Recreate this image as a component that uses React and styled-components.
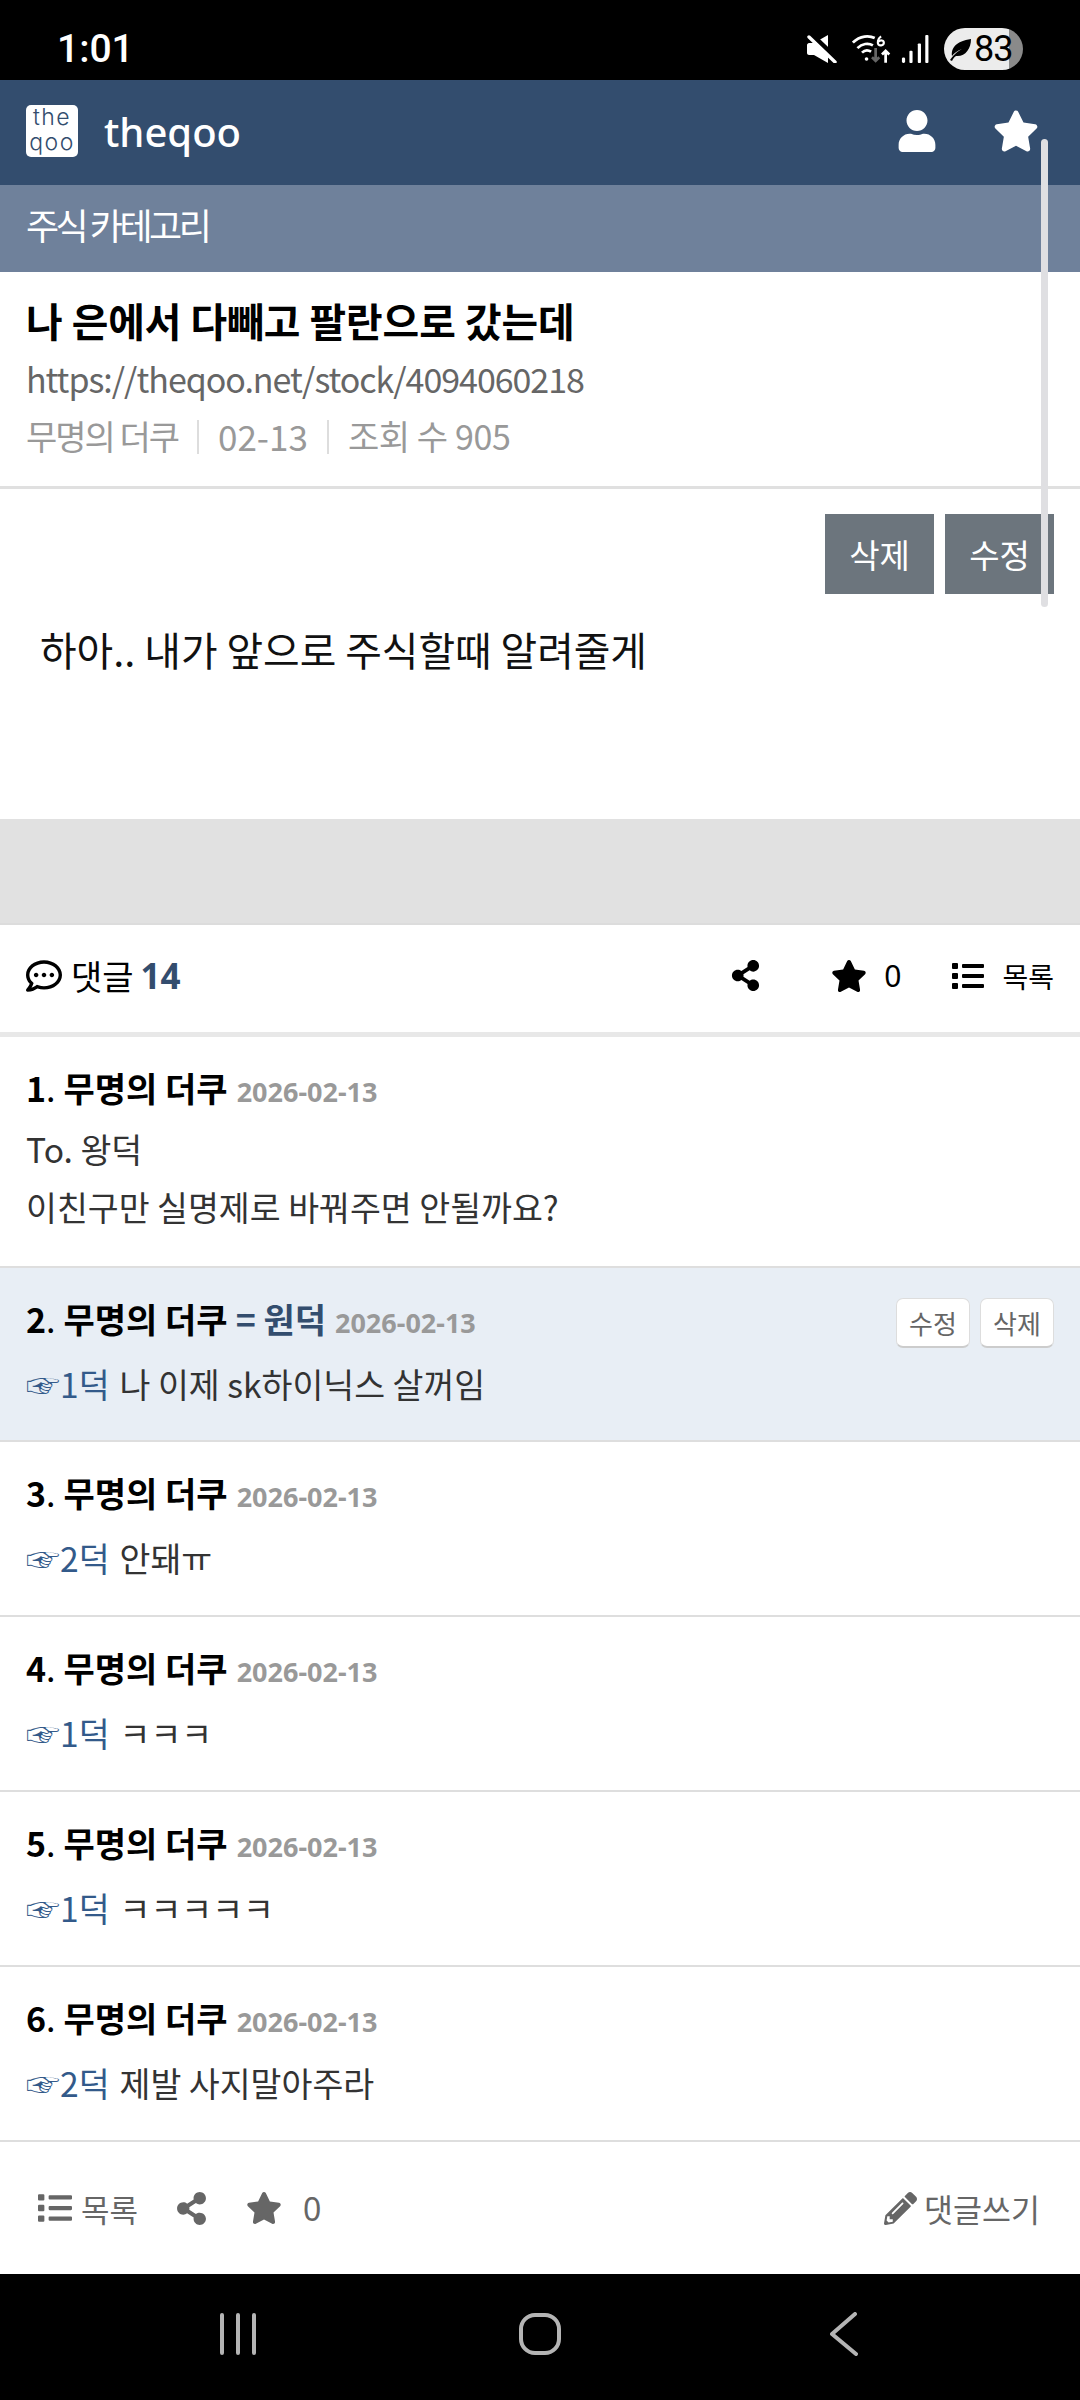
import React from "react";
import styled, { createGlobalStyle } from "styled-components";
import { FaUser, FaStar, FaRegCommentDots, FaShareAlt, FaList, FaPencilAlt } from "react-icons/fa";

const GlobalStyle = createGlobalStyle`
  html, body { margin: 0; padding: 0; background: #fff; }
  * { box-sizing: border-box; }
  body { font-family: "Noto Sans CJK KR", "Noto Sans", sans-serif; }
`;

const Page = styled.div`
  position: relative;
  width: 1080px;
  height: 2400px;
  overflow: hidden;
  display: flex;
  flex-direction: column;
  background: #fff;
`;

const StatusBar = styled.div`
  height: 80px;
  background: #000;
  color: #fff;
  display: flex;
  align-items: center;
  justify-content: space-between;
  padding: 18px 57px 0 57px;
`;
const Clock = styled.span`
  font-family: "Roboto", sans-serif;
  font-size: 39px;
  font-weight: 500;
`;
const StatusIcons = styled.div`
  display: flex;
  align-items: center;
  gap: 15px;
`;
const WifiIcon = styled.svg`
  margin-right: -6px;
`;
const Battery = styled.div`
  width: 79px;
  height: 42px;
  border-radius: 21px;
  background: linear-gradient(90deg, #ececec 82%, #8a8a8a 82%);
  color: #000;
  display: flex;
  align-items: center;
  padding-left: 5px;
  gap: 1px;
  font-family: "Roboto", sans-serif;
  font-size: 36px;
  letter-spacing: -1px;
`;

const Header = styled.header`
  height: 105px;
  background: #334d6e;
  display: flex;
  align-items: center;
  padding: 0 41px 3px 26px;
  color: #fff;
`;
const Logo = styled.div`
  width: 52px;
  height: 52px;
  border-radius: 5px;
  background: #fff;
  color: #334d6e;
  display: flex;
  flex-direction: column;
  align-items: center;
  font-family: "Inter", sans-serif;
  font-weight: 300;
  font-size: 23px;
  line-height: 25px;
  letter-spacing: 1.5px;
`;
const Brand = styled.span`
  margin-left: 26px;
  font-family: "Noto Sans", sans-serif;
  font-size: 40px;
  font-weight: 500;
  flex: 1;
`;
const HeaderIcon = styled.span`
  display: flex;
  margin-left: ${(p) => p.$gap || 0}px;
`;

const SubBar = styled.div`
  height: 87px;
  background: #6f819b;
  color: #fff;
  font-size: 36px;
  letter-spacing: -3.5px;
  display: flex;
  align-items: center;
  padding: 0 0 9px 26px;
`;

const TitleBlock = styled.section`
  height: 217px;
  padding: 23px 26px 0;
  border-bottom: 3px solid #e0e0e0;
`;
const Title = styled.h1`
  margin: 0;
  font-size: 39.8px;
  line-height: 50px;
  font-weight: 700;
  color: #000;
`;
const Url = styled.div`
  margin-top: 11px;
  font-size: 34px;
  line-height: 46px;
  letter-spacing: -1.05px;
  color: #666;
`;
const Meta = styled.div`
  margin-top: 11px;
  display: flex;
  align-items: center;
  line-height: 46px;
  color: #999;
`;
const MetaText = styled.span`
  font-size: ${(p) => p.$size || 34}px;
  letter-spacing: ${(p) => p.$spacing || 0}px;
`;
const MetaSep = styled.span`
  width: 2px;
  height: 34px;
  margin: 2px 19px 0;
  background: #ddd;
`;

const Body = styled.section`
  height: 330px;
  padding: 25px 26px 0;
`;
const Actions = styled.div`
  display: flex;
  justify-content: flex-end;
  gap: 11px;
`;
const ActionButton = styled.div`
  width: 109px;
  height: 80px;
  background: #6c757d;
  color: #fff;
  font-size: 33px;
  display: flex;
  align-items: center;
  justify-content: center;
`;
const BodyText = styled.p`
  margin: 29px 0 0 14px;
  font-size: 39.8px;
  line-height: 52px;
  color: #111;
`;

const AdBand = styled.div`
  height: 106px;
  background: #e1e1e1;
  border-bottom: 2px solid #dcdcdc;
`;

const CommentBar = styled.div`
  height: 112px;
  border-bottom: 5px solid #e8e8e8;
  padding: 0 26px 6px;
  display: flex;
  align-items: center;
  color: #000;
`;
const CommentTitle = styled.div`
  flex: 1;
  display: flex;
  align-items: center;
  gap: 9px;
  font-size: 34px;
`;
const Count = styled.b`
  color: #334d6e;
  font-family: "Noto Sans", sans-serif;
  font-weight: 700;
  font-size: 35px;
  margin-left: -2px;
`;
const BarItem = styled.div`
  display: flex;
  align-items: center;
  gap: ${(p) => p.$gap || 0}px;
  margin-left: ${(p) => p.$left || 0}px;
  font-size: ${(p) => p.$size || 28}px;
`;
const Zero = styled.span`
  font-family: "Noto Sans", sans-serif;
  font-size: ${(p) => p.$size || 30}px;
`;

const Comment = styled.article`
  position: relative;
  height: ${(p) => p.$height}px;
  padding: 27px 26px 0;
  background: ${(p) => (p.$mine ? "#e8eef5" : "#fff")};
  border-bottom: 2px solid #dedede;
`;
const CommentHead = styled.div`
  display: flex;
  align-items: baseline;
  font-size: 34px;
  line-height: 48px;
  font-weight: 700;
  color: #000;
`;
const Num = styled.span`
  font-weight: 700;
  span { font-weight: 400; }
`;
const Name = styled.span`
  margin-left: 8px;
`;
const Op = styled.span`
  margin-left: 8px;
  color: #334d6e;
`;
const Stamp = styled.span`
  margin-left: 9px;
  font-family: "Noto Sans", sans-serif;
  font-size: 27px;
  font-weight: 700;
  color: #999;
`;
const Line = styled.div`
  font-size: 33.6px;
  line-height: 58px;
  color: #333;
  margin-top: ${(p) => p.$top || 0}px;
`;
const Ref = styled.span`
  color: #335a8a;
  margin-right: 10px;
`;
const Hand = styled.span`
  font-size: 34px;
`;
const MiniButtons = styled.div`
  position: absolute;
  top: 30px;
  right: 26px;
  display: flex;
  gap: 10px;
`;
const MiniButton = styled.div`
  width: 74px;
  height: 50px;
  border-radius: 7px;
  background: #fff;
  border: 1px solid #ddd;
  border-bottom: 2px solid #ccc;
  color: #666;
  font-size: 26px;
  display: flex;
  align-items: center;
  justify-content: center;
`;

const Footer = styled.div`
  height: 132px;
  padding: 0 40px 0 38px;
  display: flex;
  align-items: center;
  color: #666;
`;
const Spacer = styled.div`
  flex: 1;
`;

const NavBar = styled.nav`
  height: 126px;
  background: #000;
  display: grid;
  grid-template-columns: repeat(3, 302px);
  justify-content: center;
  justify-items: center;
  align-items: center;
  padding-bottom: 6px;
`;
const BackIcon = styled.svg`
  margin-left: 4px;
`;

const Scrollbar = styled.div`
  position: absolute;
  top: 139px;
  right: 32px;
  width: 7px;
  height: 468px;
  border-radius: 4px;
  background: #dfdfe2;
`;

const comments = [
  { n: 3, ref: "2덕", text: "안돼ㅠ" },
  { n: 4, ref: "1덕", text: "ㅋㅋㅋ" },
  { n: 5, ref: "1덕", text: "ㅋㅋㅋㅋㅋ" },
  { n: 6, ref: "2덕", text: "제발 사지말아주라" },
];

const Head = ({ n, op }) => (
  <CommentHead>
    <Num>
      {n}
      <span>.</span>
    </Num>
    <Name>무명의 더쿠</Name>
    {op && <Op>= 원덕</Op>}
    <Stamp>2026-02-13</Stamp>
  </CommentHead>
);

const Reply = ({ to, text }) => (
  <Line $top={8}>
    <Ref>
      <Hand>☞</Hand>
      {to}
    </Ref>
    {text}
  </Line>
);

export default function App() {
  return (
    <Page>
      <GlobalStyle />
      <StatusBar>
        <Clock>1:01</Clock>
        <StatusIcons>
          <svg width="30" height="28" viewBox="0 0 30 28" fill="#fff">
            <path d="M0 10c0-1 1-2 2-2h5L21 0v28L7 20H2c-1 0-2-1-2-2z" />
            <path d="M5 0l27 26" stroke="#000" strokeWidth="5" />
            <path d="M2 2l26 25" stroke="#fff" strokeWidth="3.4" strokeLinecap="round" />
          </svg>
          <WifiIcon width="40" height="30" viewBox="0 0 44 32" fill="none" stroke="#fff" strokeWidth="3">
            <path d="M1 9c8-8 18-8 24-5M6 15c5-5 12-6 17-3M11 20c3-3 7-3 10-1" />
            <circle cx="16" cy="27" r="2" fill="#fff" stroke="none" />
            <path d="M26 15V29M22 25l4 4 4-4" stroke="#666" />
            <path d="M37 31V18M33 22l4-4 4 4" />
            <path d="M32 2c-4 3-4 7-3 9 2 2 6 1 6-2s-4-3-6-1" strokeWidth="2.4" />
          </WifiIcon>
          <svg width="28" height="28" viewBox="0 0 30 30" fill="#fff">
            <rect x="1" y="24" width="3.4" height="6" rx="1.5" />
            <rect x="9" y="17" width="3.4" height="13" rx="1" />
            <rect x="18" y="9" width="3.4" height="21" rx="1" />
            <rect x="26" y="0" width="3.4" height="30" rx="1" />
          </svg>
          <Battery>
            <svg width="24" height="24" viewBox="0 0 24 24" fill="#000">
              <path d="M1 23c3-4 6-8 12-11-5 2-8 4-10 7-1-8 4-15 19-17 0 10-6 18-15 17-2 1-3 3-4 5z" />
            </svg>
            <span>83</span>
          </Battery>
        </StatusIcons>
      </StatusBar>

      <Header>
        <Logo>
          <span>the</span>
          <span>qoo</span>
        </Logo>
        <Brand>theqoo</Brand>
        <HeaderIcon>
          <FaUser size={42} />
        </HeaderIcon>
        <HeaderIcon $gap={55}>
          <FaStar size={46} />
        </HeaderIcon>
      </Header>

      <SubBar>주식 카테고리</SubBar>

      <TitleBlock>
        <Title>나 은에서 다빼고 팔란으로 갔는데</Title>
        <Url>https://theqoo.net/stock/4094060218</Url>
        <Meta>
          <MetaText $spacing={-2}>무명의 더쿠</MetaText>
          <MetaSep />
          <MetaText $size={35}>02-13</MetaText>
          <MetaSep />
          <MetaText $spacing={-0.4}>조회 수 905</MetaText>
        </Meta>
      </TitleBlock>

      <Body>
        <Actions>
          <ActionButton>삭제</ActionButton>
          <ActionButton>수정</ActionButton>
        </Actions>
        <BodyText>하아.. 내가 앞으로 주식할때 알려줄게</BodyText>
      </Body>

      <AdBand />

      <CommentBar>
        <CommentTitle>
          <FaRegCommentDots size={36} />
          댓글
          <Count>14</Count>
        </CommentTitle>
        <BarItem>
          <FaShareAlt size={31} />
        </BarItem>
        <BarItem $left={70} $gap={17}>
          <FaStar size={36} />
          <Zero>0</Zero>
        </BarItem>
        <BarItem $left={51} $gap={18}>
          <FaList size={32} />
          목록
        </BarItem>
      </CommentBar>

      <Comment $height={231}>
        <Head n={1} />
        <Line $top={4}>To. 왕덕</Line>
        <Line>이친구만 실명제로 바꿔주면 안될까요?</Line>
      </Comment>

      <Comment $height={174} $mine>
        <Head n={2} op />
        <MiniButtons>
          <MiniButton>수정</MiniButton>
          <MiniButton>삭제</MiniButton>
        </MiniButtons>
        <Reply to="1덕" text="나 이제 sk하이닉스 살꺼임" />
      </Comment>

      {comments.map((c) => (
        <Comment key={c.n} $height={175}>
          <Head n={c.n} />
          <Reply to={c.ref} text={c.text} />
        </Comment>
      ))}

      <Footer>
        <BarItem $gap={9} $size={31}>
          <FaList size={34} />
          목록
        </BarItem>
        <BarItem $left={37}>
          <FaShareAlt size={33} />
        </BarItem>
        <BarItem $left={38} $gap={21}>
          <FaStar size={36} />
          <Zero $size={32}>0</Zero>
        </BarItem>
        <Spacer />
        <BarItem $gap={7} $size={31.5}>
          <FaPencilAlt size={33} />
          댓글쓰기
        </BarItem>
      </Footer>

      <NavBar>
        <svg width="40" height="42" viewBox="0 0 40 42" stroke="#b4b4b4" strokeWidth="4" strokeLinecap="round">
          <path d="M4 2v38M20 2v38M36 2v38" />
        </svg>
        <svg width="44" height="44" viewBox="0 0 44 44" fill="none" stroke="#b4b4b4" strokeWidth="4">
          <rect x="3" y="3" width="38" height="38" rx="14" />
        </svg>
        <BackIcon width="28" height="44" viewBox="0 0 28 44" fill="none" stroke="#b4b4b4" strokeWidth="4" strokeLinecap="round" strokeLinejoin="round">
          <path d="M25 2L2 22l24 20" />
        </BackIcon>
      </NavBar>

      <Scrollbar />
    </Page>
  );
}
